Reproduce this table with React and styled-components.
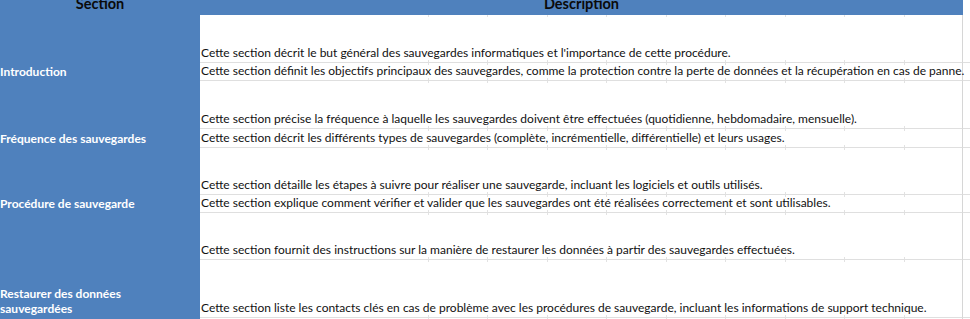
import React from "react";
import styled, { createGlobalStyle } from "styled-components";

const GlobalStyle = createGlobalStyle`
  html, body {
    margin: 0;
    padding: 0;
    background: #fff;
    overflow: hidden;
  }
  body {
    font-family: Lato, "Liberation Sans", sans-serif;
  }
`;

const rows = [
  { h: 48, text: "Cette section décrit le but général des sauvegardes informatiques et l'importance de cette procédure." },
  { h: 18, label: "Introduction", text: "Cette section définit les objectifs principaux des sauvegardes, comme la protection contre la perte de données et la récupération en cas de panne." },
  { h: 48, text: "Cette section précise la fréquence à laquelle les sauvegardes doivent être effectuées (quotidienne, hebdomadaire, mensuelle)." },
  { h: 19, label: "Fréquence des sauvegardes", text: "Cette section décrit les différents types de sauvegardes (complète, incrémentielle, différentielle) et leurs usages." },
  { h: 47, text: "Cette section détaille les étapes à suivre pour réaliser une sauvegarde, incluant les logiciels et outils utilisés." },
  { h: 18, label: "Procédure de sauvegarde", text: "Cette section explique comment vérifier et valider que les sauvegardes ont été réalisées correctement et sont utilisables." },
  { h: 47, text: "Cette section fournit des instructions sur la manière de restaurer les données à partir des sauvegardes effectuées." },
  { h: 58, label: "Restaurer des données\nsauvegardées", text: "Cette section liste les contacts clés en cas de problème avec les procédures de sauvegarde, incluant les informations de support technique." },
  { h: 20 },
];

const App = () => {
  return (
    <>
      <GlobalStyle />
      <Sheet $rows={rows.map((r) => `${r.h}px`).join(" ")}>
        <HeadCell>
          <HeadTitle>Section</HeadTitle>
        </HeadCell>
        <HeadCell>
          <HeadTitle>Description</HeadTitle>
        </HeadCell>
        <SpareHead />
        {rows.map((row, i) => (
          <React.Fragment key={i}>
            <LabelCell>{row.label && <Label>{row.label}</Label>}</LabelCell>
            <TextCell>{row.text && <Text>{row.text}</Text>}</TextCell>
            <SpareCell />
          </React.Fragment>
        ))}
      </Sheet>
    </>
  );
};

export default App;

const Sheet = styled.div`
  display: grid;
  grid-template-columns: 200px 763px 1fr;
  grid-template-rows: 15px ${({ $rows }) => $rows};
  width: 970px;
  height: 319px;
  overflow: hidden;
`;

const HeadCell = styled.div`
  display: flex;
  justify-content: center;
  align-items: flex-start;
  background: #4f81bd;
  overflow: hidden;
`;

const HeadTitle = styled.span`
  margin-top: -4px;
  font-size: 14.5px;
  line-height: 15px;
  font-weight: 700;
  color: #0a0a0a;
`;

const SpareHead = styled.div`
  background: #fff;
`;

const LabelCell = styled.div`
  display: flex;
  align-items: flex-end;
  padding-bottom: 2px;
  background: #4f81bd;
`;

const Label = styled.span`
  font-size: 12px;
  line-height: 15px;
  font-weight: 700;
  color: #fff;
  white-space: pre-line;
`;

const TextCell = styled.div`
  position: relative;
  display: flex;
  align-items: flex-end;
  box-sizing: border-box;
  padding: 0 0 2px 1px;
  border-bottom: 1px solid #dfdfdf;
  border-right: 1px solid #d6d6d6;

  /* faint column ticks peeking at the row edges */
  &::before,
  &::after {
    content: "";
    position: absolute;
    left: 228px;
    right: 0;
    height: 2px;
    background: repeating-linear-gradient(
      to right,
      #e2e2e2 0 1px,
      transparent 1px 59.5px
    );
  }
  &::before {
    top: 0;
  }
  &::after {
    bottom: 0;
  }
`;

const Text = styled.span`
  position: relative;
  z-index: 1;
  font-size: 12px;
  line-height: 14px;
  color: #111;
  white-space: nowrap;
`;

const SpareCell = styled.div`
  box-sizing: border-box;
  border-bottom: 1px solid #dfdfdf;
`;
